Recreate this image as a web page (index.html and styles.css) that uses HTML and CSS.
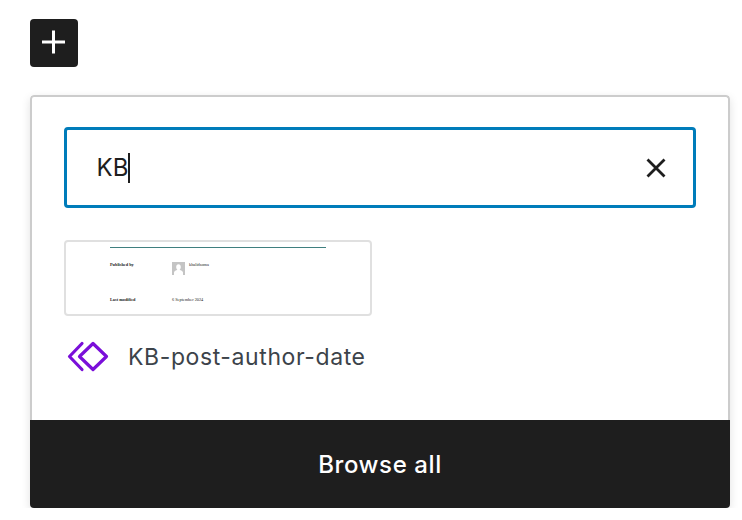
FILE: index.html
```html
<!DOCTYPE html>
<html lang="en">
<head>
  <meta charset="UTF-8">
  <meta name="viewport" content="width=device-width, initial-scale=1.0">
  <title>Block inserter</title>
  <link rel="stylesheet" href="styles.css">
</head>
<body>
  <!-- Add block button -->
  <button class="add-button" aria-label="Add block">
    <svg width="48" height="48" viewBox="0 0 48 48" fill="none">
      <path d="M23.500 11.500V34.500M12 23H35" stroke="#fff" stroke-width="3"/>
    </svg>
  </button>

  <!-- Popover -->
  <div class="popover">
    <div class="popover-body">
      <div class="search">
        <span class="search-value">KB</span><span class="caret"></span>
        <svg class="search-clear" width="24" height="24" viewBox="0 0 24 24" fill="none">
          <path d="M3.500 3.500L20.500 20.500M20.500 3.500L3.500 20.500" stroke="#1e1e1e" stroke-width="2.800"/>
        </svg>
      </div>

      <div class="result">
        <div class="preview">
          <div class="preview-rule"></div>
          <div class="preview-row preview-row-author">
            <span class="preview-label">Published by</span>
            <span class="avatar">
              <svg width="13" height="13" viewBox="0 0 13 13">
                <rect width="13" height="13" fill="#c4c4c4"/>
                <path d="M6.500 2.200C8 2.200 8.800 3.400 8.800 4.900C8.800 6.200 8.200 7.300 7.500 7.800C9 8.400 10.800 9.200 11 10.500V13H2V10.500C2.200 9.200 4 8.400 5.500 7.800C4.800 7.300 4.200 6.200 4.200 4.900C4.200 3.400 5 2.200 6.500 2.200Z" fill="#fff"/>
              </svg>
            </span>
            <span class="preview-value">khalidsoma</span>
          </div>
          <div class="preview-row">
            <span class="preview-label">Last modified</span>
            <span class="preview-value">6 September 2024</span>
          </div>
        </div>

        <div class="result-title">
          <svg width="42" height="32" viewBox="0 0 42 32" fill="none" stroke="#7a0fd9" stroke-width="3.200" stroke-linecap="round" stroke-linejoin="round">
            <path d="M15 2.500L2.500 15.500L15 28.500"/>
            <path d="M26 2.500L39.500 15.500L26 28.500L12.500 15.500Z"/>
          </svg>
          <span>KB-post-author-date</span>
        </div>
      </div>
    </div>

    <button class="browse-all">Browse all</button>
  </div>
</body>
</html>
```

FILE: styles.css
```css
* {
  margin: 0;
  padding: 0;
  box-sizing: border-box;
}

body {
  background-color: #fff;
  color: #1e1e1e;
  font-family: 'Inter', sans-serif;
  padding: 19px 12px 0 30px;
  overflow: hidden;
}

.add-button {
  display: block;
  width: 48px;
  height: 48px;
  background-color: #1e1e1e;
  border: none;
  border-radius: 4px;
}

.add-button svg {
  display: block;
}

.popover {
  margin-top: 28px;
  height: 413px;
  display: flex;
  flex-direction: column;
  border-radius: 4px;
  overflow: hidden;
  box-shadow: 0 3px 10px rgba(0, 0, 0, 0.12);
}

.popover-body {
  flex: 1;
  background-color: #fff;
  border: 2px solid #ccc;
  border-bottom: none;
  border-radius: 4px 4px 0 0;
  padding: 30px 32px 0;
}

.search {
  height: 81px;
  display: flex;
  align-items: center;
  padding: 0 25px 0 29.500px;
  border: 3px solid #007cba;
  border-radius: 4px;
}

.search-value {
  font-size: 24px;
}

.caret {
  width: 1.500px;
  height: 30px;
  background-color: #1e1e1e;
}

.search-clear {
  margin-left: auto;
}

.result {
  margin-top: 32px;
}

.preview {
  width: 308px;
  height: 76px;
  border: 2px solid #e0e0e0;
  border-radius: 4px;
  padding: 5px 0 0 44px;
  font-family: 'Liberation Serif', serif;
  font-size: 4.300px;
  color: #222;
}

.preview-rule {
  width: 216px;
  height: 1px;
  background-color: #3f7f7f;
}

.preview-row {
  display: flex;
  align-items: flex-start;
}

.preview-row-author {
  margin-top: 13px;
  height: 36px;
}

.preview-label {
  width: 62px;
  font-weight: 700;
  flex-shrink: 0;
}

.preview-row-author .preview-label,
.preview-row-author .preview-value {
  margin-top: 1px;
}

.avatar {
  width: 13px;
  height: 13px;
  margin-top: 1px;
  margin-right: 4px;
}

.avatar svg {
  display: block;
}

.result-title {
  display: flex;
  align-items: center;
  gap: 19px;
  margin-top: 25px;
  margin-left: 3px;
  font-size: 23px;
  letter-spacing: 0.6px;
  color: #3c434a;
}

.browse-all {
  height: 88px;
  flex-shrink: 0;
  background-color: #1e1e1e;
  color: #fff;
  border: none;
  font-family: 'Inter', sans-serif;
  font-size: 24px;
  font-weight: 500;
  letter-spacing: 0.6px;
}
```
